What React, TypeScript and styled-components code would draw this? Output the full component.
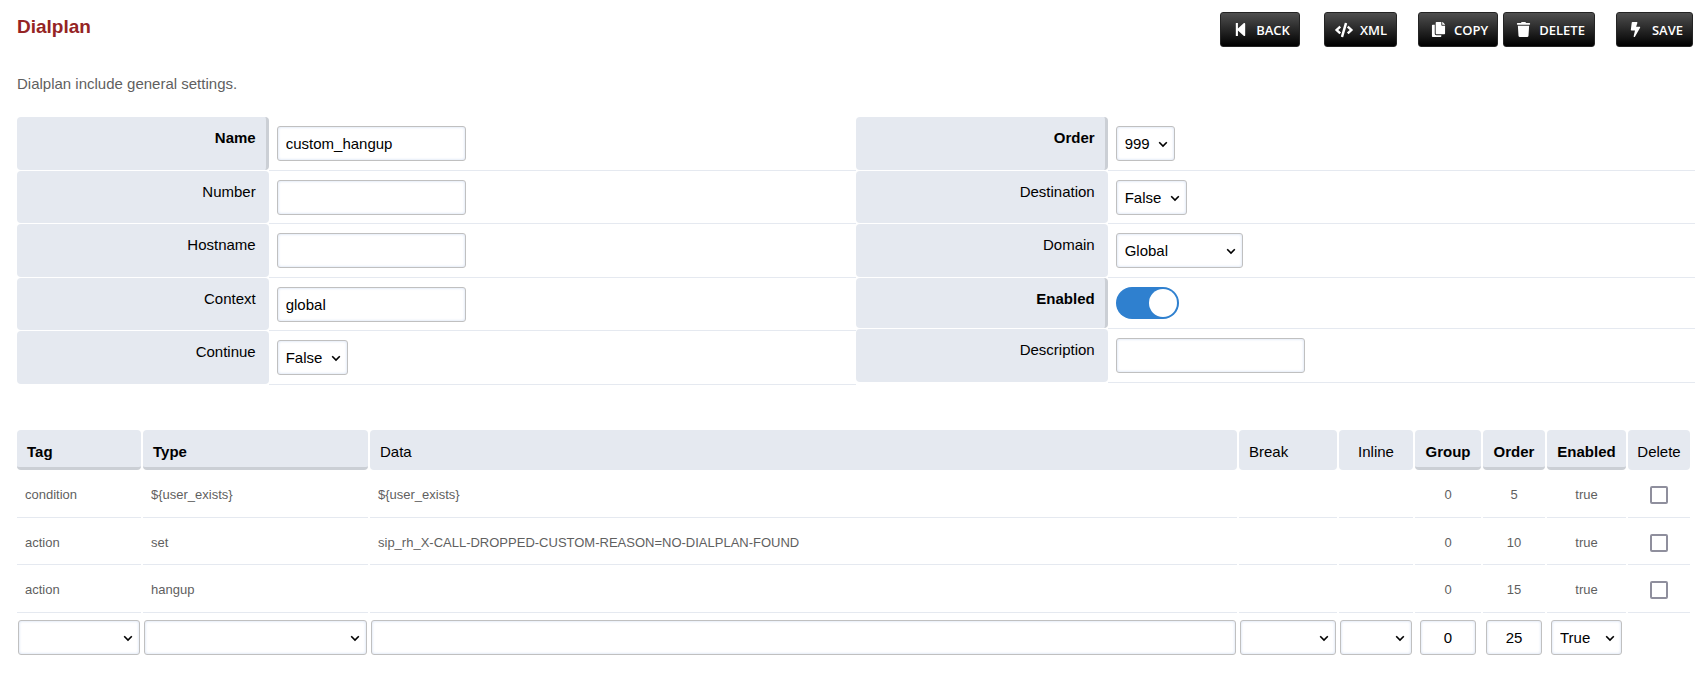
import React, { useState } from "react";
import styled, { createGlobalStyle } from "styled-components";
import { FaStepBackward, FaCode, FaCopy, FaTrash, FaBolt } from "react-icons/fa";

const GlobalStyle = createGlobalStyle`
  *, *::before, *::after { box-sizing: border-box; }
  body {
    margin: 0;
    background: #fff;
    color: #5f5f5f;
    font-family: Arial, "Liberation Sans", sans-serif;
    font-size: 15px;
    line-height: 20px;
  }
`;

const Page = styled.main`
  padding: 12px 4px 24px 17px;
`;

const ActionBar = styled.header`
  display: flex;
  justify-content: space-between;
  align-items: flex-start;
  padding-right: 2px;
`;

const Title = styled.h1`
  margin: 5px 0 0;
  color: #952424;
  font-size: 19px;
  line-height: 20px;
`;

const Actions = styled.div`
  display: flex;
  gap: 21px;
`;

const ActionGroup = styled.div`
  display: flex;
  gap: 5px;
`;

const ActionButton = styled.button`
  display: flex;
  align-items: center;
  gap: 7px;
  height: 35px;
  padding: 0 9px 0 10px;
  border: 1px solid #242424;
  border-radius: 3px;
  background: linear-gradient(#4f4f4f, #000);
  color: #fff;
  font: 600 13px/18px "Open Sans", sans-serif;
  text-transform: uppercase;
  cursor: pointer;
`;

const BackButton = styled(ActionButton)`
  margin-right: 3px;
`;

const IconSlot = styled.span`
  display: flex;
  justify-content: center;
  width: 18px;
`;

const Intro = styled.p`
  margin: 27px 0 23px;
`;

const Columns = styled.div`
  display: grid;
  grid-template-columns: 1fr 1fr;
  align-items: start;
  margin-bottom: 45px;
`;

const FieldRow = styled.div`
  display: grid;
  grid-template-columns: 30% 1fr;

  &:nth-child(even) > div { padding-bottom: 8px; }
`;

const FieldLabel = styled.label<{ $required?: boolean }>`
  margin-bottom: 1px;
  padding: 11px ${(p) => (p.$required ? 10 : 13)}px 0 0;
  border-right: ${(p) => (p.$required ? "3px solid #cbcfd5" : "0")};
  border-radius: 4px;
  background: #e5e9f0;
  color: #000;
  font-weight: ${(p) => (p.$required ? 700 : 400)};
  text-align: right;
`;

const FieldValue = styled.div`
  display: flex;
  padding: 9px 8px;
  border-bottom: 1px solid #e5e9f0;
`;

const controlFrame = `
  height: 35px;
  border: 1px solid #c0c0c0;
  border-radius: 3px;
  background: #fff;
  box-shadow: inset 0 0 3px #cddaf0;
  color: #000;
  font: 400 15px/20px Arial, "Liberation Sans", sans-serif;
`;

const TextInput = styled.input<{ $fill?: boolean; $centered?: boolean }>`
  ${controlFrame}
  display: block;
  width: ${(p) => (p.$fill ? "100%" : p.$centered ? "56px" : "189px")};
  margin: 0 auto;
  padding: 0 8px;
  text-align: ${(p) => (p.$centered ? "center" : "left")};

  ${FieldValue} > & { margin: 0; }
`;

const SelectFrame = styled.div<{ $width: string }>`
  position: relative;
  width: ${(p) => p.$width};

  td > & { margin: 0 auto; }
`;

const SelectBox = styled.select`
  ${controlFrame}
  display: block;
  width: 100%;
  padding: 0 20px 0 8px;
  appearance: none;
`;

const Chevron = styled.svg`
  position: absolute;
  top: 15px;
  right: 7px;
  width: 10px;
  height: 7px;
  pointer-events: none;
`;

const Switch = styled.input`
  display: block;
  width: 63px;
  height: 32px;
  margin: 0 0 1px;
  border-radius: 16px;
  background: #2f80cf;
  appearance: none;
  cursor: pointer;

  &::before {
    content: "";
    display: block;
    width: 28px;
    height: 28px;
    margin: 2px 2px 2px 33px;
    border-radius: 50%;
    background: #fff;
  }
  &:not(:checked) { background: #c0c0c0; }
  &:not(:checked)::before { margin-left: 2px; }
`;

const TableArea = styled.div`
  margin: 0 3px 0 -2px;
`;

const DetailTable = styled.table`
  width: 100%;
  table-layout: fixed;
  border-collapse: separate;
  border-spacing: 2px 0;
`;

const Col = styled.col<{ $width?: number }>`
  width: ${(p) => (p.$width ? `${p.$width}px` : "auto")};
`;

const HeadCell = styled.th<{ $required?: boolean; $centered?: boolean }>`
  height: 40px;
  padding: ${(p) => (p.$required ? "9px 0 2px" : "9px 0 5px")};
  padding-left: ${(p) => (p.$centered ? 0 : 10)}px;
  border-bottom: ${(p) => (p.$required ? "3px solid #cbcfd5" : "0")};
  border-radius: 4px;
  background: #e5e9f0;
  color: #000;
  font-weight: ${(p) => (p.$required ? 700 : 400)};
  text-align: ${(p) => (p.$centered ? "center" : "left")};
`;

const Cell = styled.td<{ $centered?: boolean }>`
  height: 48px;
  padding: ${(p) => (p.$centered ? "3px 0 0" : "3px 8px 0")};
  border-bottom: 1px solid #e5e9f0;
  font-size: 13px;
  text-align: ${(p) => (p.$centered ? "center" : "left")};

  tr:nth-child(even) > & { height: 47px; }
`;

const EntryCell = styled.td`
  padding: 7px 1px 0;
`;

const Tick = styled.input`
  display: block;
  width: 18px;
  height: 18px;
  margin: 0 auto;
  border: 2px solid #8f8f9d;
  border-radius: 2px;
  background: #fff;
  appearance: none;

  &:checked { background: #2f80cf; }
`;

interface SelectProps {
  id?: string;
  label?: string;
  width: string;
  options: string[];
}

function Select({ id, label, width, options }: SelectProps) {
  return (
    <SelectFrame $width={width}>
      <SelectBox id={id} aria-label={label}>
        {options.map((o) => (
          <option key={o}>{o}</option>
        ))}
      </SelectBox>
      <Chevron viewBox="0 0 10 7" aria-hidden="true">
        <path d="M1.2 1.2 5 5 8.8 1.2" fill="none" stroke="#000" strokeWidth="1.6" />
      </Chevron>
    </SelectFrame>
  );
}

interface FieldProps {
  id: string;
  label: string;
  required?: boolean;
  children: React.ReactNode;
}

function Field({ id, label, required, children }: FieldProps) {
  return (
    <FieldRow>
      <FieldLabel htmlFor={id} $required={required}>{label}</FieldLabel>
      <FieldValue>{children}</FieldValue>
    </FieldRow>
  );
}

const columns = [
  { name: "Tag", width: 124, required: true },
  { name: "Type", width: 225, required: true },
  { name: "Data" },
  { name: "Break", width: 98 },
  { name: "Inline", width: 74, centered: true },
  { name: "Group", width: 66, required: true, centered: true },
  { name: "Order", width: 62, required: true, centered: true },
  { name: "Enabled", width: 79, required: true, centered: true },
  { name: "Delete", width: 62, centered: true },
];

const details = [
  ["condition", "${user_exists}", "${user_exists}", "", "", "0", "5", "true"],
  ["action", "set", "sip_rh_X-CALL-DROPPED-CUSTOM-REASON=NO-DIALPLAN-FOUND", "", "", "0", "10", "true"],
  ["action", "hangup", "", "", "", "0", "15", "true"],
];

export default function App() {
  const [enabled, setEnabled] = useState(true);
  return (
    <Page>
      <GlobalStyle />
      <ActionBar>
        <Title>Dialplan</Title>
        <Actions>
          <BackButton type="button"><IconSlot><FaStepBackward size={15} /></IconSlot>Back</BackButton>
          <ActionButton type="button"><IconSlot><FaCode size={18} /></IconSlot>XML</ActionButton>
          <ActionGroup>
            <ActionButton type="button"><IconSlot><FaCopy size={15} /></IconSlot>Copy</ActionButton>
            <ActionButton type="button"><IconSlot><FaTrash size={15} /></IconSlot>Delete</ActionButton>
          </ActionGroup>
          <ActionButton type="submit"><IconSlot><FaBolt size={15} /></IconSlot>Save</ActionButton>
        </Actions>
      </ActionBar>
      <Intro>Dialplan include general settings.</Intro>
      <Columns>
        <div>
          <Field id="name" label="Name" required><TextInput id="name" defaultValue="custom_hangup" /></Field>
          <Field id="number" label="Number"><TextInput id="number" /></Field>
          <Field id="hostname" label="Hostname"><TextInput id="hostname" /></Field>
          <Field id="context" label="Context"><TextInput id="context" defaultValue="global" /></Field>
          <Field id="continue" label="Continue"><Select id="continue" width="71px" options={["False", "True"]} /></Field>
        </div>
        <div>
          <Field id="order" label="Order" required><Select id="order" width="59px" options={["999"]} /></Field>
          <Field id="destination" label="Destination"><Select id="destination" width="71px" options={["False", "True"]} /></Field>
          <Field id="domain" label="Domain"><Select id="domain" width="127px" options={["Global"]} /></Field>
          <Field id="enabled" label="Enabled" required>
            <Switch id="enabled" type="checkbox" role="switch" checked={enabled} onChange={(e) => setEnabled(e.target.checked)} />
          </Field>
          <Field id="description" label="Description"><TextInput id="description" /></Field>
        </div>
      </Columns>
      <TableArea>
        <DetailTable>
          <colgroup>
            {columns.map((c) => <Col key={c.name} $width={c.width} />)}
          </colgroup>
          <thead>
            <tr>
              {columns.map((c) => (
                <HeadCell key={c.name} scope="col" $required={c.required} $centered={c.centered}>{c.name}</HeadCell>
              ))}
            </tr>
          </thead>
          <tbody>
            {details.map((row) => (
              <tr key={row[6]}>
                {row.map((text, i) => <Cell key={columns[i].name} $centered={columns[i].centered}>{text}</Cell>)}
                <Cell $centered><Tick type="checkbox" aria-label={`Delete ${row[0]} ${row[1]}`} /></Cell>
              </tr>
            ))}
            <tr>
              <EntryCell><Select label="Tag" width="100%" options={[""]} /></EntryCell>
              <EntryCell><Select label="Type" width="100%" options={[""]} /></EntryCell>
              <EntryCell><TextInput aria-label="Data" $fill /></EntryCell>
              <EntryCell><Select label="Break" width="100%" options={[""]} /></EntryCell>
              <EntryCell><Select label="Inline" width="100%" options={[""]} /></EntryCell>
              <EntryCell><TextInput aria-label="Group" $centered defaultValue="0" /></EntryCell>
              <EntryCell><TextInput aria-label="Order" $centered defaultValue="25" /></EntryCell>
              <EntryCell><Select label="Enabled" width="71px" options={["True", "False"]} /></EntryCell>
              <td />
            </tr>
          </tbody>
        </DetailTable>
      </TableArea>
    </Page>
  );
}
